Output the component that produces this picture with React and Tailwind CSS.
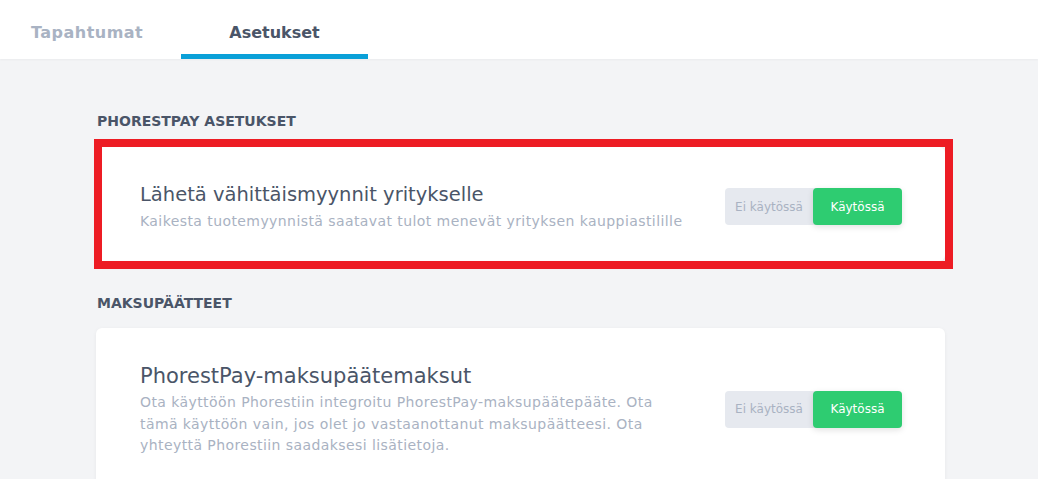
import React from "react";

function Toggle() {
  return (
    <div className="flex h-[37px] shrink-0 rounded-[4px] bg-[#e6e9ef]">
      <div className="flex w-[88px] items-center justify-center text-[12px] text-[#a9b2c2]">Ei käytössä</div>
      <div className="flex w-[89px] items-center justify-center rounded-[4px] bg-[#2ecc71] text-[12px] text-white shadow-[0_2px_6px_rgba(0,0,0,0.12)]">
        Käytössä
      </div>
    </div>
  );
}

export default function App() {
  return (
    <div className="min-h-[479px] bg-[#f3f4f6] text-[#4a5568]" style={{ fontFamily: "'DejaVu Sans', 'Open Sans', sans-serif" }}>
      <div className="flex h-[59px] items-stretch bg-white shadow-[0_1px_2px_rgba(0,0,0,0.04)]">
        <div className="flex w-[181px] items-center pl-[31px] pt-[7px] text-[16px] font-bold tracking-[0.03em] text-[#a9b3c3]">Tapahtumat</div>
        <div className="relative flex w-[187px] items-center justify-center pt-[7px] text-[16px] font-bold text-[#4a5568]">
          Asetukset
          <div className="absolute bottom-0 left-0 h-[5px] w-full bg-[#0aa0d8]" />
        </div>
      </div>

      <div className="ml-[96px] w-[849px] pt-[52px]">
        <div className="pl-[1px] text-[14px] font-bold uppercase leading-[20px] text-[#4a5568]">PHORESTPAY ASETUKSET</div>

        <div className="relative mt-[16px]">
          <div className="flex h-[114px] items-center justify-between rounded-[6px] bg-white pl-[44px] pr-[43px] pt-[5px] shadow-[0_1px_4px_rgba(0,0,0,0.04)]">
            <div>
              <div className="text-[19.5px] leading-[24px] text-[#4a5568]">Lähetä vähittäismyynnit yritykselle</div>
              <div className="mt-[4px] text-[14px] leading-[20px] tracking-[0.03em] text-[#a9b2c2]">Kaikesta tuotemyynnistä saatavat tulot menevät yrityksen kauppiastilille</div>
            </div>
            <Toggle />
          </div>
          <div className="pointer-events-none absolute -top-[8px] -bottom-[8px] -left-[2px] -right-[8px] border-[8px] border-[#ed1c24]" />
        </div>

        <div className="mt-[32px] pl-[1px] text-[14px] font-bold uppercase leading-[20px] text-[#4a5568]">MAKSUPÄÄTTEET</div>

        <div className="mt-[15px] flex items-center justify-between rounded-t-[6px] bg-white pb-[30px] pl-[44px] pr-[43px] pt-[34px] shadow-[0_1px_4px_rgba(0,0,0,0.05)]">
          <div className="w-[540px]">
            <div className="text-[21px] leading-[28px] text-[#4a5568]">PhorestPay-maksupäätemaksut</div>
            <div className="mt-[2px] text-[14px] leading-[21.5px] tracking-[0.03em] text-[#a9b2c2]">
              Ota käyttöön Phorestiin integroitu PhorestPay-maksupäätepääte. Ota tämä käyttöön vain, jos olet jo vastaanottanut maksupäätteesi. Ota yhteyttä Phorestiin saadaksesi lisätietoja.
            </div>
          </div>
          <Toggle />
        </div>
      </div>
    </div>
  );
}
